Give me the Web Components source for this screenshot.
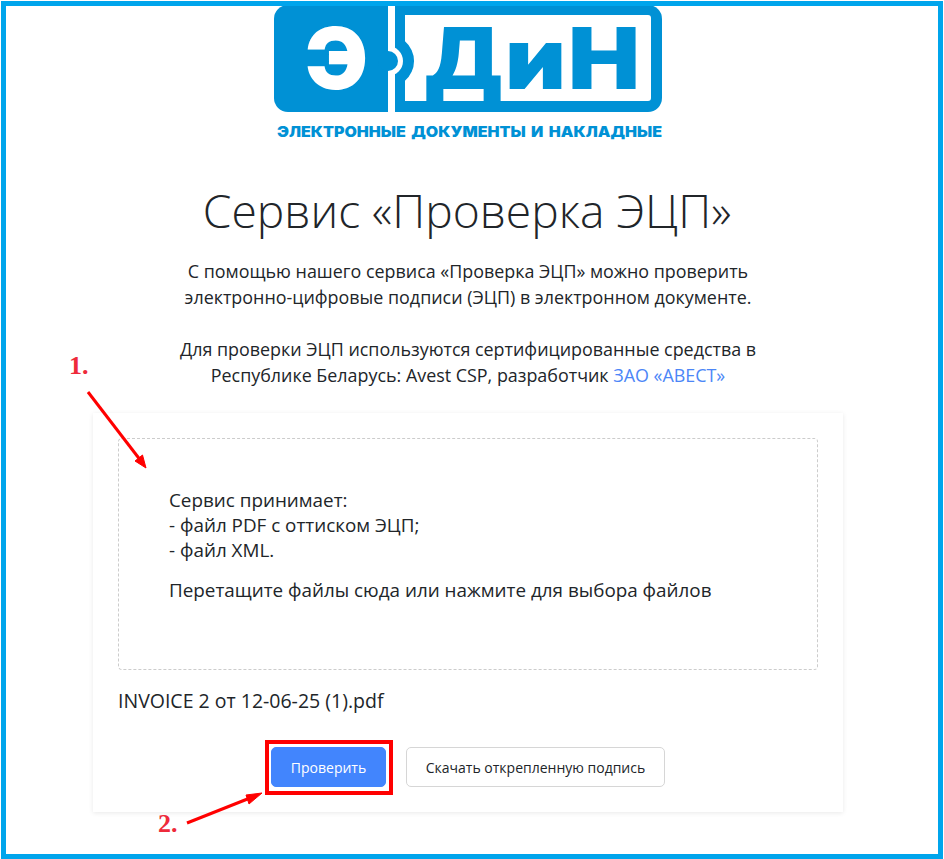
<!DOCTYPE html>
<html lang="ru">
<head>
<meta charset="utf-8">
<title>Проверка ЭЦП</title>
<style>
  html, body { margin: 0; padding: 0; background: #fff; }
  body { font-family: "Open Sans", "Noto Sans", sans-serif; color: #212529; }
</style>
</head>
<body>
<page-frame>
  <brand-logo></brand-logo>
  <service-intro>
    <span slot="title">Сервис «Проверка ЭЦП»</span>
    <p>С помощью нашего сервиса «Проверка ЭЦП» можно проверить<br>электронно-цифровые подписи (ЭЦП) в электронном документе.</p>
    <p>Для проверки ЭЦП используются сертифицированные средства в<br>Республике Беларусь: Avest CSP, разработчик <a href="#" style="color:#4c86f7;text-decoration:none">ЗАО «АВЕСТ»</a></p>
  </service-intro>
  <upload-card>
    <drop-zone>
      <div>Сервис принимает:<br>- файл PDF с оттиском ЭЦП;<br>- файл XML.</div>
      <div slot="hint">Перетащите файлы сюда или нажмите для выбора файлов</div>
    </drop-zone>
    <span slot="file">INVOICE 2 от 12-06-25 (1).pdf</span>
    <action-button slot="actions" kind="primary">Проверить</action-button>
    <action-button slot="actions">Скачать открепленную подпись</action-button>
  </upload-card>
  <red-notes></red-notes>
</page-frame>

<script>
class PageFrame extends HTMLElement {
  constructor () {
    super()
    this.attachShadow({ mode: 'open' }).innerHTML = /* html */`
      <style>
        :host {
          display: flex;
          flex-direction: column;
          align-items: center;
          box-sizing: border-box;
          position: relative;
          width: 942px;
          height: 858px;
          margin: 1px 1px 0;
          padding-right: 8px;
          border: 5px solid #00a5ec;
          overflow: hidden;
        }
      </style>
      <slot></slot>`
  }
}

class BrandLogo extends HTMLElement {
  constructor () {
    super()
    this.attachShadow({ mode: 'open' }).innerHTML = /* html */`
      <style>
        :host { display: block; width: 400px; height: 134px; flex: none; }
        svg { display: block; }
        text { font-family: Inter, Roboto, sans-serif; font-weight: 900; }
      </style>
      <svg width="400" height="134" viewBox="268 6 400 134">
        <path fill="#0091d5" d="M395 5H648a14 14 0 0 1 14 14V98a14 14 0 0 1-14 14H395Z"/>
        <path fill="#fff" d="M405 15H648a3 3 0 0 1 3 3V98a3 3 0 0 1-3 3H405V80.700A26 26 0 0 0 405 41.300Z"/>
        <circle cx="388" cy="61" r="15" fill="#fff"/>
        <path fill="#0091d5" d="M388 5V112H288a14 14 0 0 1-14-14V19a14 14 0 0 1 14-14Z"/>
        <circle cx="388" cy="61" r="10" fill="#0091d5"/>
        <text x="305" y="89" font-size="85" fill="#fff" textLength="63" lengthAdjust="spacingAndGlyphs">Э</text>
        <text x="424" y="89" font-size="85" fill="#0091d5" textLength="79" lengthAdjust="spacingAndGlyphs">Д</text>
        <text x="505" y="89" font-size="85" fill="#0091d5" textLength="61" lengthAdjust="spacingAndGlyphs">и</text>
        <text x="568" y="89" font-size="85" fill="#0091d5" textLength="72" lengthAdjust="spacingAndGlyphs">Н</text>
        <text x="277" y="137" font-size="14.500" fill="#0091d5" textLength="385" lengthAdjust="spacingAndGlyphs" style="word-spacing:2px">ЭЛЕКТРОННЫЕ ДОКУМЕНТЫ И НАКЛАДНЫЕ</text>
      </svg>`
  }
}

class ServiceIntro extends HTMLElement {
  constructor () {
    super()
    this.attachShadow({ mode: 'open' }).innerHTML = /* html */`
      <style>
        :host {
          display: block;
          text-align: center;
          font-size: 17.900px;
          line-height: 26px;
          margin-top: 42px;
        }
        h1 {
          font-weight: 300;
          font-size: 46.200px;
          line-height: 58px;
          margin: 0 2px 18px 0;
          color: #212529;
        }
        ::slotted(p) { margin: 0 0 26px; }
        ::slotted(p:last-child) { margin-bottom: 25px; }
      </style>
      <h1><slot name="title"></slot></h1>
      <slot></slot>`
  }
}

class UploadCard extends HTMLElement {
  constructor () {
    super()
    this.attachShadow({ mode: 'open' }).innerHTML = /* html */`
      <style>
        :host {
          display: block;
          box-sizing: border-box;
          width: 750px;
          height: 399px;
          padding: 25px;
          background: #fff;
          box-shadow: 0 1px 5px rgba(0,0,0,.09);
          font-size: 18.850px;
        }
        .file { margin-top: 18px; line-height: 26px; font-size: 19.500px; }
        .actions {
          display: flex;
          justify-content: center;
          gap: 20px;
          margin-top: 33px;
        }
      </style>
      <slot></slot>
      <div class="file"><slot name="file"></slot></div>
      <div class="actions"><slot name="actions"></slot></div>`
  }
}

class DropZone extends HTMLElement {
  constructor () {
    super()
    this.attachShadow({ mode: 'open' }).innerHTML = /* html */`
      <style>
        :host {
          display: block;
          box-sizing: border-box;
          height: 232px;
          padding: 49px 50px;
          border: 1px dashed #ccc;
          border-radius: 4px;
          line-height: 25px;
        }
        .hint { margin-top: 15px; }
      </style>
      <slot></slot>
      <div class="hint"><slot name="hint"></slot></div>`
  }
}

class ActionButton extends HTMLElement {
  constructor () {
    super()
    const primary = this.getAttribute('kind') === 'primary'
    this.attachShadow({ mode: 'open' }).innerHTML = /* html */`
      <style>
        :host { display: block; }
        button {
          display: block;
          box-sizing: border-box;
          height: 40px;
          width: ${primary ? 115 : 259}px;
          padding: 0;
          font: inherit;
          font-size: 14px;
          border-radius: 5px;
          border: 1px solid ${primary ? '#4285fd' : '#d6d6d6'};
          background: ${primary ? '#4285fd' : '#fff'};
          color: ${primary ? '#fff' : '#212529'};
        }
      </style>
      <button><slot></slot></button>`
  }
}

class RedNotes extends HTMLElement {
  constructor () {
    super()
    this.attachShadow({ mode: 'open' }).innerHTML = /* html */`
      <style>
        :host { position: absolute; left: 0; top: 0; width: 932px; height: 847px; pointer-events: none; }
        span {
          position: absolute;
          font: bold 26px/28px "Liberation Serif", serif;
          color: #ee2a3a;
        }
        .one { left: 63px; top: 346px; }
        .two { left: 152px; top: 804px; }
        svg { position: absolute; left: -6px; top: -6px; }
      </style>
      <span class="one">1.</span>
      <span class="two">2.</span>
      <svg width="944" height="859" fill="none">
        <rect x="267" y="742" width="124" height="51" stroke="#f00" stroke-width="4"/>
        <path d="M88 392 141 461" stroke="#f00" stroke-width="3"/>
        <path d="M146 468 135 461 142.500 455Z" fill="#f00" stroke="#f00"/>
        <path d="M187 823 250 798" stroke="#f00" stroke-width="3"/>
        <path d="M262 793 249 804 246 795Z" fill="#f00" stroke="#f00"/>
      </svg>`
  }
}

customElements.define('page-frame', PageFrame)
customElements.define('brand-logo', BrandLogo)
customElements.define('service-intro', ServiceIntro)
customElements.define('upload-card', UploadCard)
customElements.define('drop-zone', DropZone)
customElements.define('action-button', ActionButton)
customElements.define('red-notes', RedNotes)
</script>
</body>
</html>
